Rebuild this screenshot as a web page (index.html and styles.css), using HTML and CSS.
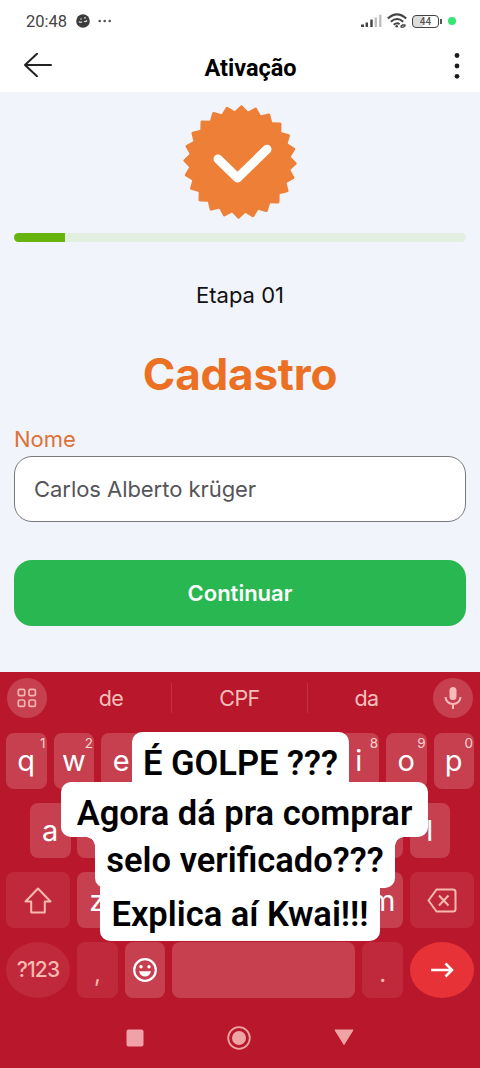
FILE: index.html
```html
<!DOCTYPE html>
<html lang="pt-BR">
  <head>
    <meta charset="UTF-8" />
    <meta name="viewport" content="width=device-width, initial-scale=1.0" />
    <title>Ativação</title>
    <link rel="stylesheet" href="styles.css">
  </head>
  <body>
    <div class="status">
      <span class="time">20:48</span>
      <svg class="app-dot" width="14" height="14" viewBox="0 0 14 14">
        <circle cx="7" cy="7" r="6.8" fill="#3c3c3c"/>
        <path d="M3 7.5q1.5 1.6 3 .3M8 7.3q1.8 1 3-.9" stroke="#ddd" stroke-width="1.3" fill="none"/>
        <circle cx="5" cy="5" r=".8" fill="#ddd"/><circle cx="9" cy="3.8" r=".9" fill="#ddd"/>
      </svg>
      <svg width="14" height="4" viewBox="0 0 14 4" fill="#555">
        <circle cx="1.7" cy="2" r="1.3"/><circle cx="6.7" cy="2" r="1.3"/><circle cx="11.7" cy="2" r="1.3"/>
      </svg>
      <div class="status-right">
        <svg width="21" height="14" viewBox="0 0 21 14">
          <path d="M0 10.5h3v2.500h-3zM4.600 8.500h2.400v4.500h-2.400zM9.300 5.500h2.400v7.500h-2.400z" fill="#444"/>
          <path d="M13.700 3.500h2.200v9.500h-2.200zM18.200 .7h2.200v12.300h-2.200z" fill="#bbb"/>
        </svg>
        <svg width="20" height="16" viewBox="0 0 20 16" fill="none" stroke="#444" stroke-width="2">
          <path d="M.8 5.500Q10-2.800 19.200 5.500M3.800 8.800Q10 3.200 16.200 8.800M6.700 11.800Q10 9 12.600 11.200"/>
          <circle cx="9.700" cy="13.300" r="1.300" fill="#444" stroke="none"/>
          <path d="M13.500 13.500l2-1.500h3M18.500 12.500l-2 1.700h-3" stroke-width="1.300"/>
        </svg>
        <div class="battery">44</div>
        <div class="green-dot"></div>
      </div>
    </div>

    <div class="header">
      <svg width="28" height="24" viewBox="0 0 28 24" fill="none" stroke="#222" stroke-width="2" stroke-linecap="round" stroke-linejoin="round">
        <path d="M27 12H1M13 .8L1 12l12 11.200"/>
      </svg>
      <h1>Ativação</h1>
      <svg class="more" width="6" height="28" viewBox="0 0 6 28" fill="#1c1c1c">
        <circle cx="3" cy="3.500" r="2.400"/><circle cx="3" cy="14" r="2.400"/><circle cx="3" cy="24.300" r="2.400"/>
      </svg>
    </div>

    <div class="main">
      <!-- seal: six squares, 15deg apart -->
      <svg class="seal" width="116" height="116" viewBox="-58 -58 116 116">
        <g fill="#ed7f36" transform="rotate(1.500)">
          <rect x="-40.500" y="-40.500" width="81" height="81" rx="1.500"/>
          <rect x="-40.500" y="-40.500" width="81" height="81" rx="1.500" transform="rotate(15)"/>
          <rect x="-40.500" y="-40.500" width="81" height="81" rx="1.500" transform="rotate(30)"/>
          <rect x="-40.500" y="-40.500" width="81" height="81" rx="1.500" transform="rotate(45)"/>
          <rect x="-40.500" y="-40.500" width="81" height="81" rx="1.500" transform="rotate(60)"/>
          <rect x="-40.500" y="-40.500" width="81" height="81" rx="1.500" transform="rotate(75)"/>
        </g>
        <path d="M-22-3L-2.500 16L27-12.800" fill="none" stroke="#fff" stroke-width="9" stroke-linecap="round" stroke-linejoin="round"/>
      </svg>
      <div class="progress"><div class="progress-bar" style="width: 11.200%"></div></div>
      <p class="step">Etapa 01</p>
      <h2>Cadastro</h2>
      <div class="label">Nome</div>
      <div class="input">Carlos Alberto krüger</div>
      <div class="btn">Continuar</div>
    </div>

    <div class="keyboard">
      <div class="suggest">
        <div class="round">
          <svg width="20" height="20" viewBox="0 0 20 20" fill="none" stroke="#f5b5b3" stroke-width="1.700">
            <rect x="1.300" y="1.300" width="6.400" height="6.400" rx="1.500"/><rect x="12" y="1.300" width="6.400" height="6.400" rx="1.500"/>
            <rect x="1.300" y="12" width="6.400" height="6.400" rx="1.500"/><rect x="12" y="12" width="6.400" height="6.400" rx="1.500"/>
          </svg>
        </div>
        <div class="words">
          <span>de</span>
          <span>CPF</span>
          <span>da</span>
        </div>
        <div class="round">
          <svg width="18" height="24" viewBox="0 0 18 24">
            <rect x="5.500" y="1" width="7" height="13" rx="3.500" fill="#f7bcb9"/>
            <path d="M1.500 11a7.500 7 0 0 0 15 0M9 18v5" fill="none" stroke="#f7bcb9" stroke-width="2"/>
          </svg>
        </div>
      </div>

      <div class="row">
        <div class="key">q<sup>1</sup></div>
        <div class="key">w<sup>2</sup></div>
        <div class="key">e</div>
        <div class="key"></div>
        <div class="key"></div>
        <div class="key"></div>
        <div class="key"></div>
        <div class="key">i<sup>8</sup></div>
        <div class="key">o<sup>9</sup></div>
        <div class="key">p<sup>0</sup></div>
      </div>
      <div class="row row-mid">
        <div class="key">a</div>
        <div class="key"></div>
        <div class="key"></div>
        <div class="key"></div>
        <div class="key"></div>
        <div class="key"></div>
        <div class="key"></div>
        <div class="key"></div>
        <div class="key">l</div>
      </div>
      <div class="row">
        <div class="key wide dark">
          <svg width="28" height="27" viewBox="0 0 28 27" fill="none" stroke="#f7b9b0" stroke-width="2" stroke-linejoin="round">
            <path d="M14 1.500L1.500 14.500H7.200V25.500H20.800V14.500H26.500Z"/>
          </svg>
        </div>
        <div class="key">z</div>
        <div class="key"></div>
        <div class="key"></div>
        <div class="key"></div>
        <div class="key"></div>
        <div class="key"></div>
        <div class="key">m</div>
        <div class="key wide dark">
          <svg width="30" height="25" viewBox="0 0 30 25" fill="none" stroke="#f7b9b0" stroke-width="2" stroke-linejoin="round">
            <path d="M9.500 1.500H26Q28.500 1.500 28.500 4V21Q28.500 23.500 26 23.500H9.500L1.500 12.500Z"/>
            <path d="M12 7.500l9.500 10M21.500 7.500l-9.500 10"/>
          </svg>
        </div>
      </div>
      <div class="row">
        <div class="key wide dark pill">?123</div>
        <div class="key dark punct">,</div>
        <div class="key">
          <svg width="26" height="26" viewBox="0 0 26 26">
            <circle cx="13" cy="13" r="10.800" fill="none" stroke="#fff" stroke-width="2.200"/>
            <circle cx="9" cy="9.700" r="1.700" fill="#fff"/><circle cx="17" cy="9.700" r="1.700" fill="#fff"/>
            <path d="M7 14.300H19Q17.500 19.500 13 19.500T7 14.300Z" fill="#fff"/>
          </svg>
        </div>
        <div class="key space"></div>
        <div class="key dark punct">.</div>
        <div class="key wide pill enter">
          <svg width="24" height="16" viewBox="0 0 24 16" fill="none" stroke="#fff" stroke-width="2.500">
            <path d="M1 8H22M15.500 1.500L22 8L15.500 14.500"/>
          </svg>
        </div>
      </div>

      <div class="nav">
        <svg width="18" height="18" viewBox="0 0 18 18"><rect x=".5" y=".5" width="17" height="17" rx="2" fill="#efa3a8"/></svg>
        <svg width="24" height="24" viewBox="0 0 24 24">
          <circle cx="12" cy="12" r="10.800" fill="none" stroke="#efa3a3" stroke-width="1.800"/>
          <circle cx="12" cy="12" r="7" fill="#efa3a3"/>
        </svg>
        <svg width="20" height="17" viewBox="0 0 20 17"><path d="M1 1H19L10 15.500Z" fill="#efa3a3" stroke="#efa3a3" stroke-linejoin="round"/></svg>
      </div>
    </div>

    <!-- caption sits over the keyboard -->
    <div class="caption">
      <div class="line line-1"><span>É GOLPE ???</span></div>
      <div class="line line-2"><span>Agora dá pra comprar</span></div>
      <div class="line line-3"><span>selo verificado???</span></div>
      <div class="line line-4"><span>Explica aí Kwai!!!</span></div>
    </div>
  </body>
</html>
```
FILE: styles.css
```css
* {
  box-sizing: border-box;
}
body {
  position: relative;
  width: 480px;
  height: 1068px;
  margin: 0;
  overflow: hidden;
  background: #fff;
  font-family: Inter, Roboto, sans-serif;
}
svg {
  display: block;
  flex: none;
}
h1, h2, p {
  margin: 0;
}
.status {
  display: flex;
  align-items: center;
  height: 42px;
  padding: 0 24px 0 26px;
}
.time {
  width: 50px;
  padding-top: 1px;
  color: #444;
  font: 400 16.500px Roboto, sans-serif;
}
.app-dot {
  margin-right: 8px;
}
.status-right {
  display: flex;
  align-items: center;
  margin-left: auto;
}
.status-right svg {
  margin-right: 5px;
}
.battery {
  position: relative;
  width: 27px;
  height: 13px;
  margin-right: 9px;
  border: 1.500px solid #444;
  border-radius: 4px;
  background: linear-gradient(90deg, #ddd 40%, #fff 40%);
  color: #555;
  font: 500 10px/11px Roboto, sans-serif;
  text-align: center;
}
.battery::after {
  content: "";
  position: absolute;
  right: -4px;
  top: 3px;
  width: 2px;
  height: 5px;
  background: #555;
}
.green-dot {
  width: 8px;
  height: 8px;
  border-radius: 50%;
  background: #34e673;
}
.header {
  display: flex;
  align-items: center;
  justify-content: space-between;
  height: 50px;
  padding: 0 20px 4px 24px;
}
.header h1 {
  padding: 5px 5px 0 0;
  font: 700 23.500px/28px Roboto, sans-serif;
  color: #000;
}
.more {
  margin-top: 2px;
}
.main {
  height: 580px;
  padding: 12px 14px 0;
  background: #f2f4fb;
}
.seal {
  margin: 0 auto;
}
.progress {
  height: 9px;
  margin-top: 13px;
  border-radius: 5px;
  overflow: hidden;
  background: #e2efe1;
}
.progress-bar {
  height: 100%;
  background: #67b40f;
}
.step {
  margin-top: 39px;
  font-size: 22px;
  line-height: 28px;
  text-align: center;
  color: #111;
}
.main h2 {
  margin-top: 36px;
  font-size: 44px;
  line-height: 58px;
  font-weight: 700;
  letter-spacing: -0.2px;
  text-align: center;
  color: #ec7023;
}
.label {
  margin-top: 22px;
  font-size: 22px;
  line-height: 28px;
  color: #dd7138;
}
.input {
  height: 66px;
  margin-top: 3px;
  padding-left: 19px;
  border: 1px solid #77777c;
  border-radius: 18px;
  background: #fff;
  font-size: 22px;
  line-height: 64px;
  letter-spacing: -0.050px;
  color: #55555a;
}
.btn {
  height: 66px;
  margin-top: 38px;
  border-radius: 18px;
  background: #29b751;
  font-size: 22px;
  line-height: 66px;
  font-weight: 600;
  text-align: center;
  color: #fff;
}
.keyboard {
  height: 396px;
  padding: 0 6px;
  background: #b9172b;
}
.suggest {
  display: flex;
  align-items: center;
  height: 52px;
  margin-bottom: 9px;
  padding: 0 1px;
}
.round {
  display: flex;
  align-items: center;
  justify-content: center;
  width: 40px;
  height: 40px;
  border-radius: 50%;
  background: #c6404f;
}
.words {
  display: grid;
  grid-template-columns: 120px 136px 118px;
  flex: 1;
  padding-left: 4px;
}
.words span {
  line-height: 30px;
  font-size: 21.500px;
  letter-spacing: -0.5px;
  text-align: center;
  color: #f7bfbc;
}
.words span + span {
  border-left: 1px solid #c5303e;
}
.row {
  display: flex;
  justify-content: space-between;
  height: 55.500px;
  margin-bottom: 14.200px;
}
.row-mid {
  padding: 0 24px;
}
.key {
  position: relative;
  display: flex;
  align-items: center;
  justify-content: center;
  width: 40.500px;
  height: 100%;
  border-radius: 8px;
  background: #c6404f;
  font-size: 29px;
  line-height: 55px;
  color: #fff;
}
.key sup {
  position: absolute;
  top: 3px;
  right: 1px;
  font-size: 13.500px;
  line-height: 15px;
  color: #fbd3ce;
}
.wide {
  width: 64px;
}
.dark {
  background: #bf293b;
}
.pill {
  border-radius: 32px / 28px;
  font-size: 21px;
  font-weight: 500;
  letter-spacing: -0.8px;
  color: #f7b9b0;
}
.punct {
  padding-top: 8px;
  font-size: 24px;
  color: #f7b9b0;
}
.space {
  width: 183px;
}
.enter {
  background: #e73338;
}
.nav {
  display: flex;
  align-items: center;
  justify-content: space-between;
  height: 52px;
  padding: 0 120px;
}
.caption {
  position: absolute;
  left: 0;
  top: 732px;
  width: 480px;
}
.line {
  position: relative;
  display: flex;
  align-items: center;
  justify-content: center;
  background: #fff;
  border-radius: 10px;
  font: 600 34.500px Roboto, sans-serif;
  white-space: nowrap;
  color: #000;
}
.line-1 {
  width: 217px;
  height: 60px;
  margin-left: 132px;
  padding-top: 2px;
}
/* stays above line 3 so its descenders are not cut */
.line-2 {
  z-index: 1;
  width: 367px;
  height: 55px;
  margin: -10px 0 0 61px;
  padding-top: 6px;
}
.line-3 {
  width: 300px;
  height: 61px;
  margin: -10px 0 0 95px;
  padding-top: 5px;
}
.line-4 {
  width: 280px;
  height: 63px;
  margin: -10px 0 0 100px;
  padding-top: 8px;
}
/* inner corners under the widest line */
.line-3::before,
.line-3::after {
  content: "";
  position: absolute;
  top: 10px;
  width: 9px;
  height: 9px;
}
.line-3::before {
  left: -9px;
  background: radial-gradient(circle at 0 100%, transparent 8.500px, #fff 9px);
}
.line-3::after {
  right: -9px;
  background: radial-gradient(circle at 100% 100%, transparent 8.500px, #fff 9px);
}
```
